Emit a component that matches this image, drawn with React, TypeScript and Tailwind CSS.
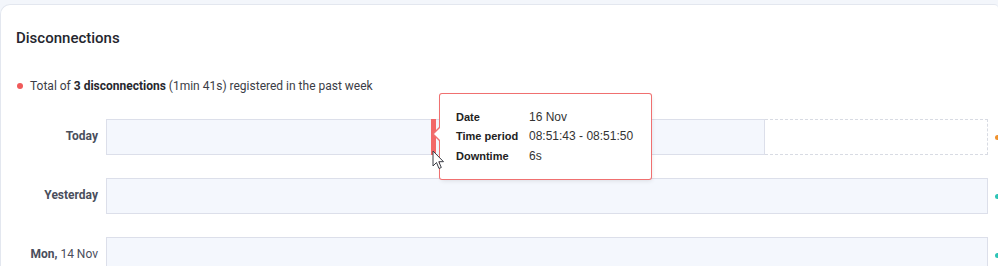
import React from 'react';

type Row = { bold: string; rest?: string; dot: string; today?: boolean };

const rows: Row[] = [
  { bold: 'Today', dot: 'bg-[#f0922e]', today: true },
  { bold: 'Yesterday', dot: 'bg-[#2ec4b6]' },
  { bold: 'Mon,', rest: ' 14 Nov', dot: 'bg-[#2ec4b6]' },
];

function Cursor() {
  return (
    <svg className="absolute left-[432px] top-[150px]" width="13" height="20" viewBox="0 0 13 20">
      <path
        d="M1 1 L1 16 L4.5 12.5 L7 18.5 L9.3 17.5 L6.8 11.7 L11.5 11.7 Z"
        fill="#ffffff"
        stroke="#3a3d45"
        strokeWidth="1"
        strokeLinejoin="round"
      />
    </svg>
  );
}

function Tooltip() {
  const items = [
    ['Date', '16 Nov'],
    ['Time period', '08:51:43 - 08:51:50'],
    ['Downtime', '6s'],
  ];
  return (
    <div className="absolute left-[440px] top-[94px] w-[211px] rounded-[2px] bg-white px-4 py-[13px] font-['Liberation_Sans',sans-serif] shadow-[0_0_0_1px_#f07070,1px_2px_4px_rgba(0,0,0,0.10)]">
      {/* notch */}
      <div className="absolute left-[-8px] top-[33px] h-0 w-0 border-y-[7px] border-r-[7px] border-y-transparent border-r-[#f07070]" />
      <div className="absolute left-[-6.5px] top-[34px] h-0 w-0 border-y-[6px] border-r-[6px] border-y-transparent border-r-white" />
      {items.map(([k, v]) => (
        <div key={k} className="flex h-[19.5px] items-center text-[#222]">
          <span className="w-[73px] text-[11px] font-bold">{k}</span>
          <span className="text-[12px] text-[#333]">{v}</span>
        </div>
      ))}
    </div>
  );
}

export default function App() {
  return (
    <div className="relative h-[266px] w-[998px] overflow-hidden bg-[#f3f6fb] pt-[4px] font-['Roboto',sans-serif]">
      <div className="h-full w-[998px] overflow-hidden rounded-tl-[10px] rounded-tr-[4px] border-l border-t border-[#e3e7ef] bg-white pl-[15px] pt-[23px]">
        <h2 className="text-[15px] font-medium leading-5 text-[#25262e]">Disconnections</h2>

        <div className="mt-[28px] flex items-center gap-[7px] text-[12px] leading-5 text-[#3b3d46]">
          <span className="ml-[1px] h-[6px] w-[6px] rounded-full bg-[#f05a5a]" />
          <span>
            Total of <b className="font-bold text-[#26272e]">3 disconnections</b> (1min 41s) registered in the past week
          </span>
        </div>

        <div className="mt-[23px] flex flex-col gap-[23px]">
          {rows.map((r) => (
            <div key={r.bold} className="flex items-center">
              <div className="w-[82px] shrink-0 whitespace-nowrap pb-[3px] text-right text-[12px] text-[#4a4e5c]">
                <span className="font-bold">{r.bold}</span>
                {r.rest}
              </div>
              <div className="ml-[8px] flex h-[36px] w-[882px] shrink-0">
                {r.today ? (
                  <>
                    <div className="relative h-full w-[659px] border border-[#dcdfea] bg-[#f4f7fd]">
                      <div className="absolute left-[324px] top-[-1px] h-[36px] w-[5px] bg-[#f26868]" />
                    </div>
                    <div className="h-full flex-1 border border-l-0 border-dashed border-[#d8dbe3] bg-white" />
                  </>
                ) : (
                  <div className="h-full w-full border border-[#dcdfea] bg-[#f4f7fd]" />
                )}
              </div>
              <span className={`ml-[7px] h-[5px] w-[5px] shrink-0 rounded-full ${r.dot}`} />
            </div>
          ))}
        </div>
      </div>

      <Tooltip />
      <Cursor />
    </div>
  );
}
